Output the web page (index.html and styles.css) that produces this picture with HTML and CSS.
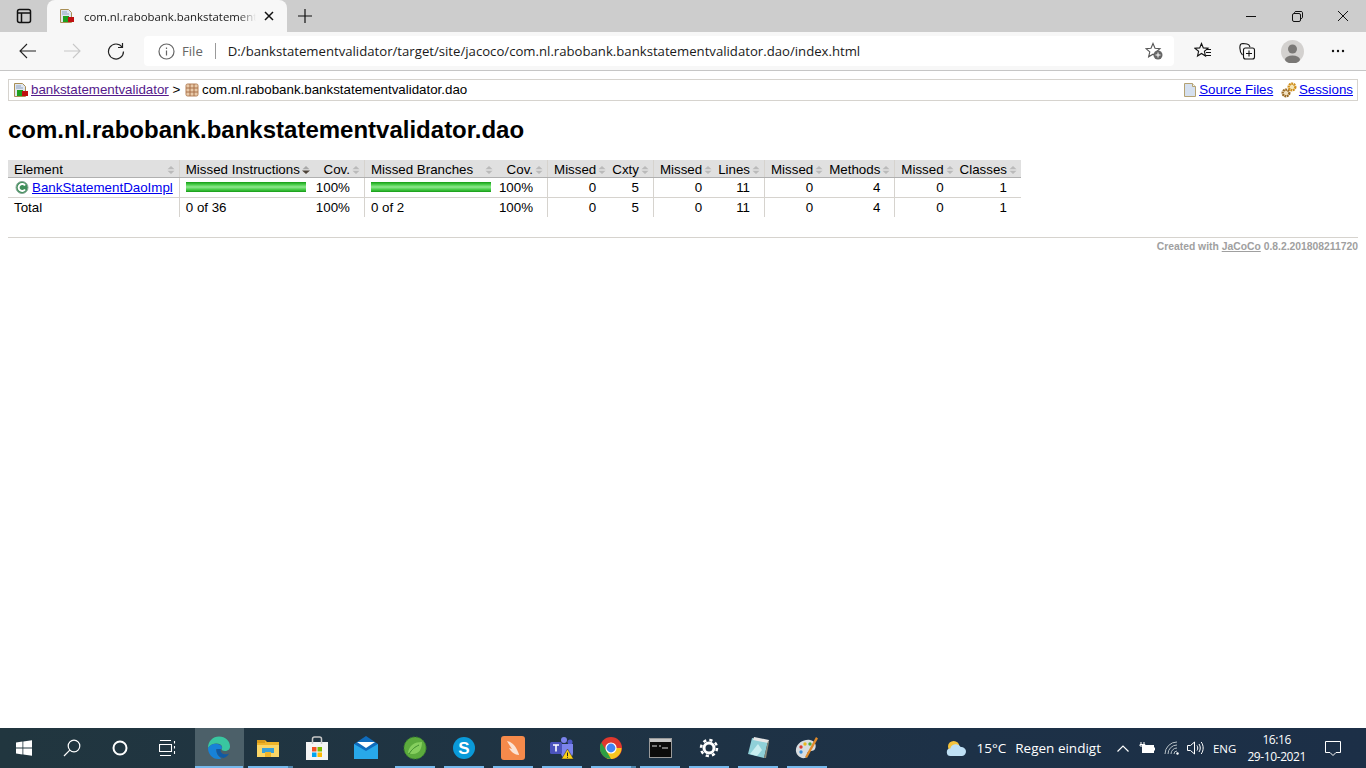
FILE: index.html
```html
<!DOCTYPE html>
<html lang="en">
<head>
    <meta charset="UTF-8">
    <title>com.nl.rabobank.bankstatementvalidator.dao</title>
    <link rel="stylesheet" href="styles.css">
</head>
<body>
<svg class="defs" width="0" height="0">
    <symbol id="sort" viewBox="0 0 8 8"><path d="M4 0l3.500 3.300H.5zM.5 4.700h7L4 8z"/></symbol>
    <symbol id="sort-down" viewBox="0 0 8 8"><path d="M4 0l3.500 3.300H.5z" fill="#a8a8a8"/><path d="M0 4.500h8L4 8z" fill="#4d4238"/></symbol>
    <symbol id="report" viewBox="0 0 16 16">
        <path d="M1.500 1.500h8l3 3v10h-11z" fill="#dfe6f0" stroke="#a98f55"/>
        <path d="M3 4h5M3 6h7" stroke="#8fa3bf"/>
        <rect x="4" y="8" width="6" height="6" fill="#1fa01f"/>
        <rect x="9" y="9" width="6" height="5" fill="#c01010"/>
    </symbol>
</svg>
<div class="screen">
    <div class="tabstrip">
        <svg class="tab-actions" width="16" height="16" viewBox="0 0 16 16" fill="none" stroke="#111" stroke-width="1.500"><rect x="1.500" y="1.500" width="13" height="13" rx="2"/><path d="M1.500 5h13M5.500 5v9.500"/></svg>
        <div class="tab">
            <svg width="16" height="16"><use href="#report"/></svg>
            <span class="tab-title">com.nl.rabobank.bankstatementvalidator.dao</span>
            <svg class="tab-close" width="10" height="10" viewBox="0 0 10 10" stroke="#111" stroke-width="1.500"><path d="M1 1l8 8M9 1l-8 8"/></svg>
        </div>
        <svg class="new-tab" width="14" height="14" viewBox="0 0 14 14" stroke="#111" stroke-width="1.200"><path d="M7 0v14M0 7h14"/></svg>
        <div class="win-controls">
            <svg width="46" height="32" viewBox="0 0 46 32" fill="none" stroke="#111"><path d="M18 16.500h10"/></svg>
            <svg width="46" height="32" viewBox="0 0 46 32" fill="none" stroke="#111"><rect x="18.500" y="13.500" width="8" height="8" rx="1.500"/><path d="M20.500 13.500v-1a1.500 1.500 0 0 1 1.500-1h5a1.500 1.500 0 0 1 1.500 1v5a1.500 1.500 0 0 1-1.500 1h-1"/></svg>
            <svg width="46" height="32" viewBox="0 0 46 32" fill="none" stroke="#111"><path d="M18 11l10 10M28 11L18 21"/></svg>
        </div>
    </div>
    <div class="toolbar">
        <span class="tool"><svg width="18" height="16" viewBox="0 0 18 16" fill="none" stroke="#222" stroke-width="1.100"><path d="M17 8H1M8 1L1 8l7 7"/></svg></span>
        <span class="tool"><svg width="18" height="16" viewBox="0 0 18 16" fill="none" stroke="#c8c8c8" stroke-width="1.100"><path d="M1 8h16M10 1l7 7-7 7"/></svg></span>
        <span class="tool"><svg width="18" height="18" viewBox="0 0 18 18" fill="none" stroke="#222" stroke-width="1.200"><path d="M15 5A7.500 7.500 0 1 0 16.500 9.500"/><path d="M15.500 1v4.500H11"/></svg></span>
        <div class="address">
            <svg width="17" height="17" viewBox="0 0 17 17" fill="none" stroke="#666" stroke-width="1.200"><circle cx="8.500" cy="8.500" r="7.500"/><path d="M8.500 7.500v5M8.500 4.500v1.500"/></svg>
            <span class="scheme">File</span>
            <span class="sep"></span>
            <span class="url">D:/bankstatementvalidator/target/site/jacoco/com.nl.rabobank.bankstatementvalidator.dao/index.html</span>
            <svg class="star-add" width="18" height="18" viewBox="0 0 18 18"><path d="M8 1.500l2 4.700 5 .4-3.800 3.300 1.200 4.900L8 12.200l-4.400 2.600 1.200-4.900L1 6.600l5-.4z" fill="none" stroke="#555" stroke-width="1.100"/><circle cx="13" cy="13" r="4.500" fill="#666"/><path d="M13 10.500v5M10.500 13h5" stroke="#fff"/></svg>
        </div>
        <span class="tool tool-right"><svg width="18" height="18" viewBox="0 0 18 18" fill="none" stroke="#111" stroke-width="1.100"><path d="M7.500 1.500l1.800 4.400 4.700.4-3.600 3 1.100 4.700-4-2.500-4 2.500 1.100-4.700-3.600-3 4.700-.4z"/><path d="M12 7.500h5M12 10.500h5M12 13.500h5"/></svg></span>
        <span class="tool tool-right"><svg width="18" height="18" viewBox="0 0 18 18" fill="none" stroke="#111" stroke-width="1.100"><path d="M3.500 13C1.500 11 .5 8 1 4c.1-1.500 1.300-2.500 3-2.500l4 .5c1.500.2 2.500 1.200 3 3"/><rect x="4.500" y="6" width="11" height="11" rx="2"/><path d="M10 8.500v6M7 11.500h6"/></svg></span>
        <span class="tool tool-right"><span class="avatar"><svg width="23" height="23" viewBox="0 0 23 23"><circle cx="11.500" cy="11.500" r="11.500" fill="#d3d1cf"/><circle cx="11.500" cy="9" r="4.500" fill="#7a7876"/><ellipse cx="11.500" cy="19.500" rx="7.500" ry="4" fill="#7a7876"/></svg></span></span>
        <span class="tool tool-right"><svg width="14" height="4" viewBox="0 0 14 4" fill="#111"><circle cx="2" cy="2" r="1.200"/><circle cx="7" cy="2" r="1.200"/><circle cx="12" cy="2" r="1.200"/></svg></span>
    </div>

    <div class="page">
        <div class="breadcrumb">
            <span class="crumbs">
                <svg class="ico" width="16" height="16"><use href="#report"/></svg><a class="visited" href="#">bankstatementvalidator</a> &gt;
                <svg class="ico pkg" width="16" height="16" viewBox="0 0 16 16"><rect x="2" y="2" width="12" height="12" rx="1.500" fill="#e8c9a8" stroke="#b5825a"/><path d="M6 2v12M10 2v12M2 6h12M2 10h12" stroke="#a8704a"/></svg>com.nl.rabobank.bankstatementvalidator.dao
            </span>
            <span class="info">
                <svg class="ico" width="16" height="16" viewBox="0 0 16 16"><path d="M2.500 1.500h8l3 3v10h-11z" fill="#d5e0ef" stroke="#b5a273"/><path d="M10.500 1.500v3h3" fill="#f4f4ec" stroke="#b5a273"/></svg><a href="#">Source Files</a>
                <svg class="ico gears" width="16" height="16" viewBox="0 0 16 16"><circle cx="5" cy="11" r="3.300" fill="#f0e0c0" stroke="#9a6a24" stroke-width="2.400" stroke-dasharray="1.800 .6"/><circle cx="11" cy="5" r="3.300" fill="#f5e6b8" stroke="#d08f1c" stroke-width="2.400" stroke-dasharray="1.800 .6"/></svg><a href="#">Sessions</a>
            </span>
        </div>
        <h1>com.nl.rabobank.bankstatementvalidator.dao</h1>
        <table class="coverage">
            <thead>
                <tr>
                    <td>Element<svg class="sort"><use href="#sort"/></svg></td>
                    <td class="bar">Missed Instructions<svg class="sort"><use href="#sort-down"/></svg></td>
                    <td class="ctr2">Cov.<svg class="sort"><use href="#sort"/></svg></td>
                    <td class="bar">Missed Branches<svg class="sort"><use href="#sort"/></svg></td>
                    <td class="ctr2">Cov.<svg class="sort"><use href="#sort"/></svg></td>
                    <td class="ctr1">Missed<svg class="sort"><use href="#sort"/></svg></td>
                    <td class="ctr2">Cxty<svg class="sort"><use href="#sort"/></svg></td>
                    <td class="ctr1">Missed<svg class="sort"><use href="#sort"/></svg></td>
                    <td class="ctr2">Lines<svg class="sort"><use href="#sort"/></svg></td>
                    <td class="ctr1">Missed<svg class="sort"><use href="#sort"/></svg></td>
                    <td class="ctr2">Methods<svg class="sort"><use href="#sort"/></svg></td>
                    <td class="ctr1">Missed<svg class="sort"><use href="#sort"/></svg></td>
                    <td class="ctr2">Classes<svg class="sort"><use href="#sort"/></svg></td>
                </tr>
            </thead>
            <tbody>
                <tr>
                    <td><svg class="el-class" width="16" height="15" viewBox="0 0 16 15"><circle cx="8" cy="7.500" r="6" fill="#3f8f5a" stroke="#8aa898"/><path d="M11 5.500A3.500 3.500 0 1 0 11 9.500" fill="none" stroke="#fff" stroke-width="2"/></svg><a href="#">BankStatementDaoImpl</a></td>
                    <td class="bar"><span class="greenbar"></span></td>
                    <td class="ctr2">100%</td>
                    <td class="bar"><span class="greenbar"></span></td>
                    <td class="ctr2">100%</td>
                    <td class="ctr1">0</td>
                    <td class="ctr2">5</td>
                    <td class="ctr1">0</td>
                    <td class="ctr2">11</td>
                    <td class="ctr1">0</td>
                    <td class="ctr2">4</td>
                    <td class="ctr1">0</td>
                    <td class="ctr2">1</td>
                </tr>
            </tbody>
            <tfoot>
                <tr>
                    <td>Total</td>
                    <td class="bar">0 of 36</td>
                    <td class="ctr2">100%</td>
                    <td class="bar">0 of 2</td>
                    <td class="ctr2">100%</td>
                    <td class="ctr1">0</td>
                    <td class="ctr2">5</td>
                    <td class="ctr1">0</td>
                    <td class="ctr2">11</td>
                    <td class="ctr1">0</td>
                    <td class="ctr2">4</td>
                    <td class="ctr1">0</td>
                    <td class="ctr2">1</td>
                </tr>
            </tfoot>
        </table>
        <div class="footer">Created with <a href="#">JaCoCo</a> 0.8.2.201808211720</div>
    </div>

    <div class="taskbar">
        <span class="sys"><svg width="16" height="16" viewBox="0 0 18 18" fill="#fff"><path d="M0 2.800l7.300-1v6.700H0zM8.200 1.700L18 .3v8.200H8.200zM0 9.500h7.300v6.700l-7.300-1zM8.200 9.500H18v8.200l-9.800-1.400z"/></svg></span>
        <span class="sys"><svg width="18" height="18" viewBox="0 0 18 18" fill="none" stroke="#fff" stroke-width="1.200"><circle cx="11" cy="7" r="5.800"/><path d="M6.800 11.200L1 17"/></svg></span>
        <span class="sys"><svg width="16" height="16" viewBox="0 0 16 16" fill="none" stroke="#fff" stroke-width="2"><circle cx="8" cy="8" r="6.500"/></svg></span>
        <span class="sys"><svg width="18" height="16" viewBox="0 0 18 16" fill="none" stroke="#fff" stroke-width="1.100"><path d="M1 .5h11M1 15.500h11M.5 4.500h12v7H.5zM15.500 1v2.500M15.500 6v2.500M15.500 11v3"/></svg></span>
        <span class="task active"><svg width="24" height="24" viewBox="0 0 24 24"><path d="M1 12C1 5 6 .5 12 .5c6.500 0 11 4.500 11 10 0 3-2.500 4.500-5 4.500-2 0-3.500-.7-3.500-2 1-1 1-3-1-4.500C10 6.500 4.500 7 1 12z" fill="#39c6a0"/><path d="M1 12c3-5 9-5.500 13-2.500 1.300 1.300 1 2.500.5 3.500H9.500c-.5 3 1 7 5 9.500C7 25 1 19 1 12z" fill="#1782d8"/><path d="M9.500 13c-.5 4 2 8 7 9 2.500-.8 4.500-2.500 5.500-4.500-3 1.500-7 1-8-1.500-.7-1-.3-2.300-.5-3z" fill="#0f5aa5"/></svg></span>
        <span class="task open multi"><svg width="22" height="22" viewBox="0 0 22 22"><path d="M0 3h8l2 2h12v15H0z" fill="#f0b429"/><path d="M0 3h8v3H0z" fill="#d89a1a"/><path d="M0 8h22v12H0z" fill="#fbd667"/><rect x="5" y="11" width="12" height="5" fill="#3aa0d8"/><rect x="8" y="15" width="6" height="5" fill="#f0b429"/></svg></span>
        <span class="task"><svg width="24" height="24" viewBox="0 0 24 24"><path d="M1 6h22v18H1z" fill="#f4f4f4"/><path d="M7.500 8V3a2 2 0 0 1 2-2h5a2 2 0 0 1 2 2v5" fill="none" stroke="#c8c8c8" stroke-width="1.500"/><path d="M7 11h4.500v4.500H7z" fill="#f25022"/><path d="M12.500 11H17v4.500h-4.500z" fill="#7fba00"/><path d="M7 16.500h4.500V21H7z" fill="#00a4ef"/><path d="M12.500 16.500H17V21h-4.500z" fill="#ffb900"/></svg></span>
        <span class="task"><svg width="24" height="24" viewBox="0 0 24 24"><path d="M0 8L12 0l12 8v15H0z" fill="#0f6cbd"/><path d="M0 8l12 7 12-7v15H0z" fill="#28a8ea"/><path d="M3 6h18l-9 6z" fill="#fff"/></svg></span>
        <span class="task open"><svg width="24" height="24" viewBox="0 0 24 24"><circle cx="12" cy="12" r="11" fill="#5cab3d" stroke="#3b8a2a" stroke-dasharray="2 1.500"/><path d="M5 17C6 9 12 6 19 6c0 7-3 12-9 12-2 0-3-.5-5-1z" fill="#86cf5e"/><path d="M6 18C9 13 12 11 16 9" stroke="#3f8c2e" fill="none"/></svg></span>
        <span class="task open"><svg width="24" height="24" viewBox="0 0 24 24"><circle cx="12" cy="12" r="11" fill="#0a9ad9"/><text x="12" y="18" text-anchor="middle" class="skype">S</text></svg></span>
        <span class="task open"><svg width="24" height="24" viewBox="0 0 24 24"><rect width="24" height="24" rx="3" fill="#f58a4b"/><path d="M6 5c5 1 9 5 11 11 1 2 1 3 1 3-4 0-8-3-10-7l3 1C9 10 7 7 6 5z" fill="#fbe3d4"/></svg></span>
        <span class="task open"><svg width="24" height="24" viewBox="0 0 24 24"><circle cx="14" cy="4" r="3" fill="#7b83eb"/><circle cx="20" cy="6" r="2.500" fill="#5059c9"/><path d="M11 8h12v9a5 5 0 0 1-12 0z" fill="#7b83eb"/><rect y="6" width="12" height="12" rx="1.500" fill="#4b53bc"/><path d="M3 9h6M6 9v6.500" stroke="#fff" stroke-width="1.600"/><path d="M17.500 13l6 10h-12z" fill="#fcd116" stroke="#222" stroke-width=".5"/><path d="M17.500 16.500v3.500M17.500 20.800v1" stroke="#222"/></svg></span>
        <span class="task open multi"><svg width="22" height="22" viewBox="0 0 22 22"><circle cx="11" cy="11" r="11" fill="#e0382e"/><path d="M2 16L11 11h10.500A11 11 0 0 1 7 21.500z" fill="#f7c51f"/><path d="M1.300 5.500L7 15l4 7A11 11 0 0 1 1.300 5.500z" fill="#2f9e44"/><circle cx="11" cy="11" r="5" fill="#4285f4" stroke="#fff" stroke-width="1.200"/></svg></span>
        <span class="task open"><svg width="23" height="20" viewBox="0 0 23 20"><rect x=".5" y=".5" width="22" height="19" fill="#0b0b0b" stroke="#9a9a9a"/><rect x="1" y="1" width="21" height="3" fill="#c6c6c6"/><path d="M3 8h5M10 8h2M13 10h6" stroke="#dcdcdc"/></svg></span>
        <span class="task open"><svg width="20" height="20" viewBox="0 0 20 20" fill="none" stroke="#fff"><circle cx="10" cy="10" r="5" stroke-width="3"/><circle cx="10" cy="10" r="8" stroke-width="2.500" stroke-dasharray="3.200 3.100"/></svg></span>
        <span class="task open"><svg width="24" height="24" viewBox="0 0 24 24"><path d="M6 2l16 3-4 17-16-4z" fill="#8fd0d8"/><path d="M8 1l15 3-1 3L7 4z" fill="#e6e6e6"/><path d="M18 22l4-17 1 1-3 16z" fill="#8a8a7a"/><path d="M4 18l8-10 4 6-5 6z" fill="#c9eef0"/></svg></span>
        <span class="task open"><svg width="24" height="24" viewBox="0 0 24 24"><path d="M1 13C2 7 9 3 15 4c5 1 7 5 5 9-2 3-5 1-7 3-2 2 0 5-3 6-5 1-10-4-9-9z" fill="#d8dde0"/><circle cx="6" cy="11" r="1.700" fill="#d93a32"/><circle cx="10" cy="8" r="1.700" fill="#e8b81f"/><circle cx="15" cy="8" r="1.700" fill="#4fa83d"/><circle cx="6" cy="16" r="1.700" fill="#3a8fd9"/><path d="M21 1l2 1.500L12 22l-2-1z" fill="#e08a2a"/></svg></span>
        <div class="tray">
            <svg class="weather" width="21" height="17" viewBox="0 0 22 18"><circle cx="8" cy="7" r="6" fill="#f5c33b"/><path d="M5 17a4 4 0 0 1-.5-8A6 6 0 0 1 15.500 7.500 4.800 4.800 0 0 1 17 17z" fill="#bfe0f5"/></svg>
            <span class="temp">15°C</span>
            <span class="forecast">Regen eindigt</span>
            <svg class="chevron" width="12" height="7" viewBox="0 0 12 7" fill="none" stroke="#fff" stroke-width="1.200"><path d="M.5 6.500L6 1l5.500 5.500"/></svg>
            <svg class="battery" width="16" height="12" viewBox="0 0 16 12" fill="none" stroke="#fff"><path d="M2 0v2.500M5 0v2.500M1 2.500h5V4H1zM3.500 4v2.500"/><rect x="3.500" y="3.500" width="11" height="7" fill="#fff"/><path d="M15.500 5.500v3"/></svg>
            <svg class="wifi" width="16" height="14" viewBox="0 0 16 14" fill="none" stroke="#b8c2c8"><path d="M1 13a12 12 0 0 1 12-12M4 13a9 9 0 0 1 9-9M7 13a6 6 0 0 1 6-6M10 13a3 3 0 0 1 3-3"/><circle cx="13.500" cy="12.500" r="1.200" fill="#fff" stroke="none"/></svg>
            <svg class="volume" width="17" height="14" viewBox="0 0 17 14" fill="none" stroke="#fff"><path d="M.5 4.500h3L7.500 1v12l-4-3.500h-3zM10 4.500c1 1.500 1 3.500 0 5M12 3c1.700 2.500 1.700 5.500 0 8M14.200 1c2.600 3.700 2.600 8.300 0 12"/></svg>
            <span class="lang">ENG</span>
            <span class="clock"><span>16:16</span><span>29-10-2021</span></span>
            <svg class="notify" width="16" height="16" viewBox="0 0 16 16" fill="none" stroke="#fff"><path d="M.5 1.500h15v11h-4.500l-3 3-3-3h-4.500z"/></svg>
        </div>
    </div>
</div>
</body>
</html>
```

FILE: styles.css
```css
html, body {
    margin: 0;
    height: 100%;
    overflow: hidden;
}
.defs {
    position: absolute;
}
.screen {
    display: flex;
    flex-direction: column;
    height: 768px;
    background: white;
}

/* browser chrome */
.tabstrip {
    display: flex;
    align-items: center;
    height: 32px;
    background: #cdcdcd;
    flex-shrink: 0;
}
.tab-actions {
    margin-left: 16px;
    margin-right: 15px;
}
.tab {
    display: flex;
    align-items: center;
    align-self: stretch;
    width: 240px;
    box-sizing: border-box;
    padding: 0 11px 0 12px;
    background: #f7f7f7;
    border-radius: 8px 8px 0 0;
}
.tab-title {
    flex: 1;
    margin-left: 9px;
    overflow: hidden;
    white-space: nowrap;
    font: 11.4px "Open Sans", sans-serif;
    color: #1a1a1a;
    -webkit-mask-image: linear-gradient(to right, black 90%, transparent 100%);
    mask-image: linear-gradient(to right, black 90%, transparent 100%);
}
.tab-close {
    margin-left: 8px;
    margin-right: 2px;
}
.new-tab {
    margin-left: 11px;
}
.win-controls {
    display: flex;
    margin-left: auto;
}
.toolbar {
    display: flex;
    align-items: center;
    height: 38px;
    padding: 0 6px;
    background: #f7f7f7;
    border-bottom: 1px solid #c6c6c6;
    flex-shrink: 0;
}
.tool {
    display: flex;
    align-items: center;
    justify-content: center;
    width: 44px;
    height: 30px;
}
.tool-right {
    width: 45px;
}
.avatar {
    display: flex;
}
.address {
    display: flex;
    align-items: center;
    flex: 1;
    height: 30px;
    margin: 0 6px;
    padding: 0 11px 0 14px;
    background: white;
    border-radius: 4px;
    font: 13.17px "Open Sans", sans-serif;
    white-space: nowrap;
}
.scheme {
    margin-left: 7px;
    color: #666;
}
.sep {
    width: 1px;
    height: 16px;
    margin: 0 12px;
    background: #9a9a9a;
}
.url {
    color: #1a1a1a;
}
.star-add {
    margin-left: auto;
}

/* report page */
.page {
    flex: 1;
    padding: 8px;
    font: 13.333px "Liberation Sans", Arial, sans-serif;
    color: black;
}
.page a {
    color: #0000ee;
}
.page a.visited {
    color: #551a8b;
}
.breadcrumb {
    display: flex;
    justify-content: space-between;
    padding: 2px 4px;
    border: 1px solid #d6d3ce;
}
.ico {
    margin-right: 2px;
    vertical-align: top;
}
.info .ico {
    margin-right: 1px;
}
.pkg {
    margin-left: 0;
}
.info .gears {
    margin-left: 4px;
    margin-right: 2px;
}
h1 {
    margin: 15px 0 16px;
    font-size: 24px;
    font-weight: bold;
}
.coverage {
    border-collapse: collapse;
    white-space: nowrap;
}
.coverage td {
    padding: 2px 6px;
    border-bottom: 1px solid #d6d3ce;
}
.coverage thead td {
    position: relative;
    padding: 2px 14px 0 6px;
    background: #e0e0e0;
    border-bottom: 1px solid #b0b0b0;
}
.coverage tfoot td {
    border-bottom: none;
}
.coverage td.bar {
    border-left: 1px solid #d6d3ce;
}
.coverage td.ctr1 {
    text-align: right;
    padding-right: 14px;
    border-left: 1px solid #d6d3ce;
}
.coverage td.ctr2 {
    text-align: right;
    padding-left: 2px;
    padding-right: 14px;
}
.sort {
    position: absolute;
    right: 4px;
    top: 6px;
    width: 8px;
    height: 8px;
    fill: #bababa;
}
.el-class {
    margin-right: 2px;
    vertical-align: top;
}
.greenbar {
    display: block;
    width: 120px;
    height: 10px;
    margin: 2px 0 3px;
    background: linear-gradient(#149a14, #48cc48 25%, #90e890 50%, #48cc48 75%, #149a14);
}
.footer {
    margin-top: 20px;
    padding-top: 3px;
    border-top: 1px solid #d6d3ce;
    font-size: 10.35px;
    font-weight: bold;
    color: #a0a0a0;
    text-align: right;
}
.page .footer a {
    color: #a0a0a0;
}

/* taskbar */
.taskbar {
    display: flex;
    align-items: center;
    height: 40px;
    background: linear-gradient(to right, #21363f, #1d3147 70%, #1c2f47);
    color: white;
    flex-shrink: 0;
}
.sys {
    display: flex;
    align-items: center;
    justify-content: center;
    width: 48px;
    height: 40px;
}
.task {
    display: flex;
    align-items: center;
    justify-content: center;
    position: relative;
    box-sizing: border-box;
    width: 49px;
    height: 40px;
    padding-right: 1px;
}
.task.active {
    margin-left: 3px;
    background: #4c6069;
}
.task.active::after, .task.open::after {
    content: "";
    position: absolute;
    left: 4px;
    right: 5px;
    bottom: 0;
    height: 2px;
    background: #76b9ed;
}
.task.active::after {
    left: 0;
    right: 1px;
}
.task.multi::after {
    right: 0;
    background: linear-gradient(to right, #76b9ed 88%, #4f86ad 88%);
}
.skype {
    font: bold 17px "Liberation Sans", sans-serif;
    fill: white;
}
.tray {
    display: flex;
    align-items: center;
    margin-left: auto;
    padding-right: 25px;
    font: 13.5px "Open Sans", sans-serif;
    white-space: nowrap;
}
.temp {
    margin-left: 10px;
}
.forecast {
    margin-left: 9px;
}
.chevron {
    margin-left: 16px;
}
.battery {
    margin-left: 10px;
}
.wifi {
    margin-left: 9px;
}
.volume {
    margin-left: 7px;
}
.lang {
    margin-left: 9px;
    font-size: 11.5px;
}
.clock {
    display: flex;
    flex-direction: column;
    align-items: center;
    margin-left: 11px;
    font-size: 12px;
    letter-spacing: -.4px;
    line-height: 17px;
}
.notify {
    margin-left: 19px;
}
```
